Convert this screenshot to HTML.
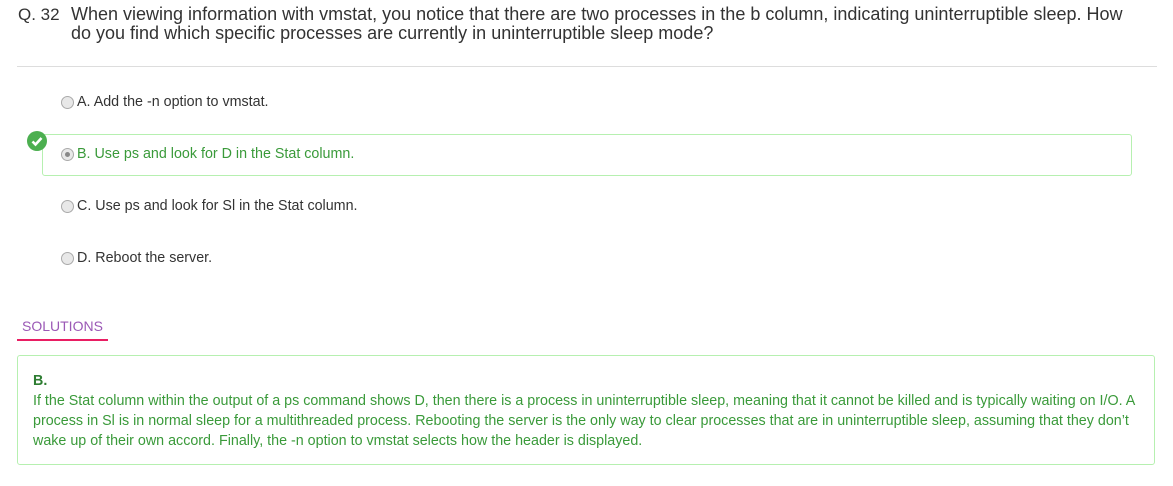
<!DOCTYPE html>
<html><head><meta charset="utf-8"><style>
body{margin:0;background:#fff;font-family:"Liberation Sans",Arial,sans-serif;width:1173px;height:486px;position:relative;overflow:hidden}
.q{position:absolute;left:18px;top:5px;font-size:18px;color:#333;line-height:19px}
.q .n{position:absolute;left:0;top:0;white-space:nowrap;font-size:17px}
.q .t{position:absolute;left:53px;top:0;width:1060px}
.hr{position:absolute;left:17px;top:66px;width:1140px;height:1px;background:#ddd}
.opt{position:absolute;left:61px;font-size:14.3px;color:#333}
.rad{display:inline-block;width:13px;height:13px;border:1px solid #aaa;border-radius:50%;background:#e8e8e8;vertical-align:-3px;margin-right:3px;box-sizing:border-box;position:relative}
.box{position:absolute;left:42px;top:134px;width:1088px;height:40px;border:1px solid #b6f0b0;border-radius:3px}
.chk{position:absolute;left:27px;top:131px;width:20px;height:20px;border-radius:50%;background:#4caf50}
.sol{position:absolute;left:22px;top:318px;font-size:14px;color:#9b59b6}
.ul{position:absolute;left:17px;top:339px;width:91px;height:2px;background:#e91e63}
.ans{position:absolute;left:17px;top:355px;width:1138px;height:110px;border:1px solid #b6f0b0;border-radius:3px;box-sizing:border-box;padding:15px 15px;font-size:14.3px;line-height:20px;color:#3a9a3a}
</style></head><body>
<div class="q"><span class="n">Q. 32</span><span class="t">When viewing information with vmstat, you notice that there are two processes in the b column, indicating uninterruptible sleep. How do you find which specific processes are currently in uninterruptible sleep mode?</span></div>
<div class="hr"></div>
<div class="opt" style="top:94px"><span class="rad"></span>A. Add the -n option to vmstat.</div>
<div class="box"></div>
<div class="chk"><svg width="20" height="20" viewBox="0 0 20 20"><path d="M5.5 10.5l3 3 6-6.5" stroke="#fff" stroke-width="2.6" fill="none"/></svg></div>
<div class="opt" style="top:146px;color:#3a9a3a"><span class="rad"><span style="position:absolute;left:3px;top:3px;width:5px;height:5px;border-radius:50%;background:#888"></span></span>B. Use ps and look for D in the Stat column.</div>
<div class="opt" style="top:198px"><span class="rad"></span>C. Use ps and look for Sl in the Stat column.</div>
<div class="opt" style="top:250px"><span class="rad"></span>D. Reboot the server.</div>
<div class="sol">SOLUTIONS</div>
<div class="ul"></div>
<div class="ans"><b style="color:#2e7d32">B.</b><br>If the Stat column within the output of a ps command shows D, then there is a process in uninterruptible sleep, meaning that it cannot be killed and is typically waiting on I/O. A process in Sl is in normal sleep for a multithreaded process. Rebooting the server is the only way to clear processes that are in uninterruptible sleep, assuming that they don’t wake up of their own accord. Finally, the -n option to vmstat selects how the header is displayed.</div>
</body></html>
